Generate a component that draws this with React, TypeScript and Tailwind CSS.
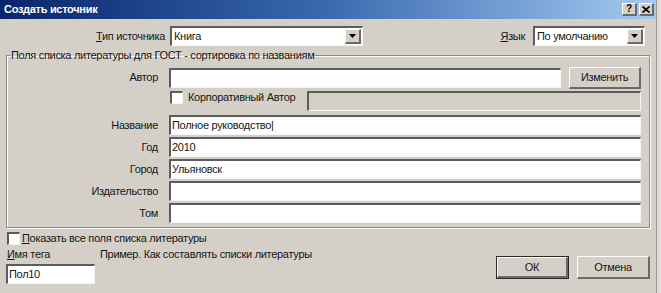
import React from "react";

const sunken =
  "border-t-2 border-l-2 border-t-[#5c5c5c] border-l-[#5c5c5c] border-b border-r border-b-[#f4f4f4] border-r-[#f4f4f4]";
const raised =
  "border-t border-l border-t-white border-l-white border-b-2 border-r-2 border-b-[#6a6a6a] border-r-[#6a6a6a]";

function TextBox({ value = "", className = "" }: { value?: string; className?: string }) {
  return (
    <div className={`h-[20px] bg-white ${sunken} pl-[1px] leading-[17px] whitespace-nowrap overflow-hidden ${className}`}>
      {value}
    </div>
  );
}

function Select({ value, className = "" }: { value: string; className?: string }) {
  return (
    <div className={`h-[20px] bg-white ${sunken} flex items-stretch ${className}`}>
      <span className="flex-1 pl-[2px] leading-[17px] whitespace-nowrap">{value}</span>
      <div className={`w-[16px] bg-[#d4d0c8] ${raised} flex items-center justify-center my-[1px] mr-[1px]`}>
        <svg width="7" height="4" viewBox="0 0 7 4">
          <path d="M0 0h7L3.5 4z" fill="#000" />
        </svg>
      </div>
    </div>
  );
}

function Check({ className = "" }: { className?: string }) {
  return <div className={`w-[13px] h-[13px] bg-white ${sunken} shrink-0 ${className}`} />;
}

function Button({ children, className = "", def = false }: { children: React.ReactNode; className?: string; def?: boolean }) {
  return (
    <div className={`${def ? "border border-[#2a2a2a]" : ""} ${className}`}>
      <div className={`h-full bg-[#d4d0c8] ${raised} flex items-center justify-center`}>{children}</div>
    </div>
  );
}

function Row({ label, children, className = "" }: { label: string; children: React.ReactNode; className?: string }) {
  return (
    <div className={`flex items-center h-[20px] ${className}`}>
      <div className="w-[152px] text-right pr-[1px]">{label}</div>
      <div className="ml-[10px] flex-1 flex items-center">{children}</div>
    </div>
  );
}

export default function App() {
  return (
    <div
      className="w-[661px] h-[293px] overflow-hidden bg-[#d4d0c8] text-[11px] tracking-[-0.3px] text-[#161616] flex"
      style={{ fontFamily: '"Liberation Sans", Arial, sans-serif' }}
    >
      <div className="w-[656px] flex flex-col">
        {/* Title bar */}
        <div className="h-[19px] bg-gradient-to-r from-[#0a246a] via-[#3a6ab0] to-[#a6caf0] flex items-center pl-[4px] pr-[2px]">
          <span className="text-white font-bold text-[11px] tracking-[-0.3px]">Создать источник</span>
          <div className="flex-1" />
          <div className="flex gap-[2px]">
            <div className={`w-[15px] h-[13px] bg-[#d4d0c8] ${raised} flex items-center justify-center text-[10px] font-bold leading-none text-black`}>?</div>
            <div className={`w-[15px] h-[13px] bg-[#d4d0c8] ${raised} flex items-center justify-center`}>
              <svg width="8" height="7" viewBox="0 0 8 7">
                <path d="M0.5 0.5L7.5 6.5M7.5 0.5L0.5 6.5" stroke="#000" strokeWidth="1.7" />
              </svg>
            </div>
          </div>
        </div>

        {/* Row 1 */}
        <div className="flex items-center mt-[7px] h-[20px]">
          <div className="w-[165px] text-right">
            <span className="underline">Т</span>ип источника
          </div>
          <Select value="Книга" className="ml-[5px] w-[193px]" />
          <div className="flex-1" />
          <div>
            <span className="underline">Я</span>зык
          </div>
          <Select value="По умолчанию" className="ml-[8px] w-[112px] mr-[11px]" />
        </div>

        {/* Group */}
        <fieldset className="mt-[3px] ml-[6px] mr-[6px] border border-[#8a8a8a] shadow-[inset_1px_1px_0_#fff,1px_1px_0_#fff] pb-[4px] pr-[8px]">
          <legend className="ml-[3px] px-[1px] leading-[13px]">Поля списка литературы для ГОСТ - сортировка по названиям</legend>
          <div className="flex items-center h-[21px] mt-[5px]">
            <div className="w-[152px] text-right pr-[1px]">Автор</div>
            <TextBox className="ml-[10px] w-[392px]" />
            <div className="flex-1" />
            <Button className="w-[72px] h-[22px]">Изменить</Button>
          </div>
          <div className="flex items-start h-[20px] mt-[3px]">
            <div className="w-[152px]" />
            <Check className="ml-[11px]" />
            <span className="ml-[5px] leading-[13px]">Корпоративный Автор</span>
            <div className="flex-1" />
            <div className={`w-[334px] h-[20px] bg-[#d4d0c8] ${sunken}`} />
          </div>
          <Row label="Название" className="mt-[4px]">
            <TextBox value="Полное руководство|" className="flex-1" />
          </Row>
          <Row label="Год" className="mt-[2px]">
            <TextBox value="2010" className="flex-1" />
          </Row>
          <Row label="Город" className="mt-[2px]">
            <TextBox value="Ульяновск" className="flex-1" />
          </Row>
          <Row label="Издательство" className="mt-[2px]">
            <TextBox className="flex-1" />
          </Row>
          <Row label="Том" className="mt-[2px]">
            <TextBox className="flex-1" />
          </Row>
        </fieldset>

        {/* Bottom */}
        <div className="flex px-[6px]">
          <div className="flex flex-col">
            <div className="flex items-center mt-[4px] h-[13px] ml-[1px]">
              <Check />
              <span className="ml-[2px] leading-[13px]">
                <span className="underline">П</span>оказать все поля списка литературы
              </span>
            </div>
            <div className="flex mt-[3px]">
              <div className="flex flex-col w-[90px]">
                <div className="leading-[13px] ml-[1px]">
                  <span className="underline">И</span>мя тега
                </div>
                <TextBox value="Пол10" className="mt-[3px] w-[89px]" />
              </div>
              <div className="ml-[4px] leading-[13px]">Пример. Как составлять списки литературы</div>
            </div>
          </div>
          <div className="flex-1" />
          <div className="flex mt-[28px] gap-[8px] mr-[0px]">
            <Button def className="w-[73px] h-[23px]">ОК</Button>
            <Button className="w-[73px] h-[23px]">Отмена</Button>
          </div>
        </div>
      </div>
      <div className="w-[1px] bg-[#9a9a9a]" />
      <div className="w-[4px] bg-[#dedad4]" />
    </div>
  );
}
